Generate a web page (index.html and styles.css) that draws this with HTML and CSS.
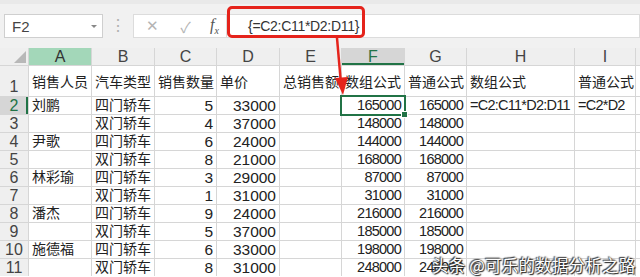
FILE: index.html
```html
<!DOCTYPE html>
<html>
<head>
  <meta charset="UTF-8">
  <title>数组公式 - 工作表</title>
  <link rel="stylesheet" href="styles.css">
</head>
<body>
  <div class="app">
    <!-- Formula bar -->
    <div class="toolbar">
      <div class="formula-row">
        <div class="name-box">
          <span>F2</span>
          <span class="caret"></span>
        </div>
        <div class="grip">&#8942;</div>
        <div class="fx-buttons">
          <span class="btn">&#10005;</span>
          <span class="btn check">&#10003;</span>
          <span class="fx">f<sub>x</sub></span>
        </div>
        <div class="formula-input">
          <span class="formula-text">{=C2:C11*D2:D11}</span>
        </div>
      </div>
    </div>

    <!-- Sheet -->
    <div class="sheet">
      <div class="hdr corner"><span class="tri"></span></div>
      <div class="hdr col col-a">A</div>
      <div class="hdr col">B</div>
      <div class="hdr col">C</div>
      <div class="hdr col">D</div>
      <div class="hdr col">E</div>
      <div class="hdr col active">F</div>
      <div class="hdr col">G</div>
      <div class="hdr col">H</div>
      <div class="hdr col">I</div>
      <div class="hdr col"></div>

      <div class="hdr row tall">1</div>
      <div class="cell mid">销售人员</div>
      <div class="cell mid">汽车类型</div>
      <div class="cell mid">销售数量</div>
      <div class="cell mid">单价</div>
      <div class="cell mid">总销售额</div>
      <div class="cell mid">数组公式</div>
      <div class="cell mid">普通公式</div>
      <div class="cell mid">数组公式</div>
      <div class="cell mid">普通公式</div>
      <div class="cell"></div>

      <div class="hdr row active">2</div>
      <div class="cell">刘鹏</div>
      <div class="cell">四门轿车</div>
      <div class="cell num">5</div>
      <div class="cell num">33000</div>
      <div class="cell"></div>
      <div class="cell num narrow selected">165000</div>
      <div class="cell num narrow">165000</div>
      <div class="cell narrow">=C2:C11*D2:D11</div>
      <div class="cell narrow">=C2*D2</div>
      <div class="cell"></div>

      <div class="hdr row">3</div>
      <div class="cell"></div>
      <div class="cell">双门轿车</div>
      <div class="cell num">4</div>
      <div class="cell num">37000</div>
      <div class="cell"></div>
      <div class="cell num narrow">148000</div>
      <div class="cell num narrow">148000</div>
      <div class="cell"></div>
      <div class="cell"></div>
      <div class="cell"></div>

      <div class="hdr row">4</div>
      <div class="cell">尹歌</div>
      <div class="cell">四门轿车</div>
      <div class="cell num">6</div>
      <div class="cell num">24000</div>
      <div class="cell"></div>
      <div class="cell num narrow">144000</div>
      <div class="cell num narrow">144000</div>
      <div class="cell"></div>
      <div class="cell"></div>
      <div class="cell"></div>

      <div class="hdr row">5</div>
      <div class="cell"></div>
      <div class="cell">双门轿车</div>
      <div class="cell num">8</div>
      <div class="cell num">21000</div>
      <div class="cell"></div>
      <div class="cell num narrow">168000</div>
      <div class="cell num narrow">168000</div>
      <div class="cell"></div>
      <div class="cell"></div>
      <div class="cell"></div>

      <div class="hdr row">6</div>
      <div class="cell">林彩瑜</div>
      <div class="cell">四门轿车</div>
      <div class="cell num">3</div>
      <div class="cell num">29000</div>
      <div class="cell"></div>
      <div class="cell num narrow">87000</div>
      <div class="cell num narrow">87000</div>
      <div class="cell"></div>
      <div class="cell"></div>
      <div class="cell"></div>

      <div class="hdr row">7</div>
      <div class="cell"></div>
      <div class="cell">双门轿车</div>
      <div class="cell num">1</div>
      <div class="cell num">31000</div>
      <div class="cell"></div>
      <div class="cell num narrow">31000</div>
      <div class="cell num narrow">31000</div>
      <div class="cell"></div>
      <div class="cell"></div>
      <div class="cell"></div>

      <div class="hdr row">8</div>
      <div class="cell">潘杰</div>
      <div class="cell">四门轿车</div>
      <div class="cell num">9</div>
      <div class="cell num">24000</div>
      <div class="cell"></div>
      <div class="cell num narrow">216000</div>
      <div class="cell num narrow">216000</div>
      <div class="cell"></div>
      <div class="cell"></div>
      <div class="cell"></div>

      <div class="hdr row">9</div>
      <div class="cell"></div>
      <div class="cell">双门轿车</div>
      <div class="cell num">5</div>
      <div class="cell num">37000</div>
      <div class="cell"></div>
      <div class="cell num narrow">185000</div>
      <div class="cell num narrow">185000</div>
      <div class="cell"></div>
      <div class="cell"></div>
      <div class="cell"></div>

      <div class="hdr row">10</div>
      <div class="cell">施德福</div>
      <div class="cell">四门轿车</div>
      <div class="cell num">6</div>
      <div class="cell num">33000</div>
      <div class="cell"></div>
      <div class="cell num narrow">198000</div>
      <div class="cell num narrow">198000</div>
      <div class="cell"></div>
      <div class="cell"></div>
      <div class="cell"></div>

      <div class="hdr row">11</div>
      <div class="cell"></div>
      <div class="cell">双门轿车</div>
      <div class="cell num">8</div>
      <div class="cell num">31000</div>
      <div class="cell"></div>
      <div class="cell num narrow">248000</div>
      <div class="cell num narrow">248000</div>
      <div class="cell"></div>
      <div class="cell"></div>
      <div class="cell"></div>
    </div>

    <!-- Annotation: red box round the formula + arrow to F2 -->
    <div class="highlight"></div>
    <svg class="arrow" width="30" height="70" viewBox="0 0 30 70">
      <line x1="7" y1="0" x2="11" y2="46" stroke="#e5231b" stroke-width="2.5"/>
      <polygon points="5,40 18,39 13,57" fill="#e5231b"/>
    </svg>

    <div class="watermark">头条 @可乐的数据分析之路</div>
  </div>
</body>
</html>
```

FILE: styles.css
```css
body {
  margin: 0;
  font-family: "Liberation Sans", "Noto Sans CJK SC", sans-serif;
  background: #fff;
}
.app {
  position: relative;
  width: 640px;
  height: 277px;
  overflow: hidden;
}
.toolbar {
  height: 48px;
  background: #f1f1f1;
  border-top: 4px solid #e9e9e9;
  box-sizing: border-box;
  padding-top: 10px;
}
.formula-row {
  display: flex;
  height: 24px;
}
.name-box {
  margin-left: 4px;
  width: 99px;
  background: #fff;
  border: 1px solid #cfcfcf;
  box-sizing: border-box;
  display: flex;
  align-items: center;
  justify-content: space-between;
  padding: 0 5px 0 7px;
  font-size: 15px;
  color: #444;
}
.caret {
  width: 0;
  height: 0;
  border-left: 3px solid transparent;
  border-right: 3px solid transparent;
  border-top: 3px solid #888;
}
.grip {
  width: 30px;
  text-align: center;
  color: #b0b0b0;
  font-size: 16px;
  line-height: 24px;
}
.fx-buttons {
  width: 94px;
  background: #fff;
  border: 1px solid #dcdcdc;
  box-sizing: border-box;
  display: flex;
  align-items: center;
  color: #b4b4b4;
  font-size: 15px;
}
.btn {
  width: 33px;
  text-align: center;
}
.btn:first-child {
  margin-left: 2px;
}
.fx {
  margin-left: 8px;
  color: #555;
  font-family: "Liberation Serif", serif;
  font-style: italic;
  font-size: 16px;
}
.fx sub {
  font-size: 10px;
}
.formula-input {
  flex: 1;
  background: #fff;
  border: 1px solid #dcdcdc;
  border-left: none;
  display: flex;
  align-items: center;
  padding-left: 21px;
  font-size: 14px;
  letter-spacing: -0.3px;
  color: #333;
}
.sheet {
  display: grid;
  grid-template-columns: 28px 62px 62px 61px 62px 61px 62px 61px 107px 60px 10px;
  grid-template-rows: 17px 30px repeat(10, 17px);
  gap: 1px;
  background: #d6d6d6;
}
.hdr {
  background: #efefef;
  color: #444;
  font-size: 16px;
  display: flex;
  align-items: center;
  justify-content: center;
  line-height: 17px;
}
.hdr.col-a {
  background: #a3d7b9;
  color: #333;
}
.hdr.col.active {
  background: #d6d6d6;
  color: #217346;
  box-shadow: inset 0 -2px 0 #217346;
}
.hdr.row.active {
  background: #d6d6d6;
  color: #217346;
  box-shadow: inset -2px 0 0 #217346;
}
.hdr.row.tall {
  align-items: flex-end;
  padding-bottom: 1px;
}
.corner {
  position: relative;
}
.tri {
  position: absolute;
  right: 2px;
  bottom: 2px;
  width: 0;
  height: 0;
  border-left: 12px solid transparent;
  border-bottom: 12px solid #b8b8b8;
}
.cell {
  background: #fff;
  color: #222;
  font-size: 14px;
  line-height: 17px;
  padding: 0 3px;
  display: flex;
  align-items: flex-end;
  white-space: nowrap;
  overflow: visible;
}
.cell.mid {
  align-items: center;
  padding-top: 2px;
}
.cell.num {
  justify-content: flex-end;
  font-size: 15.5px;
}
.cell.narrow {
  font-size: 14.5px;
  letter-spacing: -0.75px;
}
.cell.selected {
  position: relative;
  outline: 2px solid #217346;
  outline-offset: 0;
}
.cell.selected::after {
  content: "";
  position: absolute;
  right: -4px;
  bottom: -4px;
  width: 5px;
  height: 5px;
  background: #217346;
  border: 1px solid #fff;
}
.highlight {
  position: absolute;
  left: 227px;
  top: 6px;
  width: 138px;
  height: 32px;
  border: 3px solid #e5231b;
  border-radius: 5px;
  box-sizing: border-box;
}
.arrow {
  position: absolute;
  left: 330px;
  top: 38px;
}
.watermark {
  position: absolute;
  left: 432px;
  top: 253px;
  font-family: "Noto Sans CJK SC", sans-serif;
  font-size: 16.5px;
  letter-spacing: 0.2px;
  color: #fff;
  text-shadow: 0 0 2px #222, 1px 1px 1px #222, -1px -1px 1px #444;
}
```
